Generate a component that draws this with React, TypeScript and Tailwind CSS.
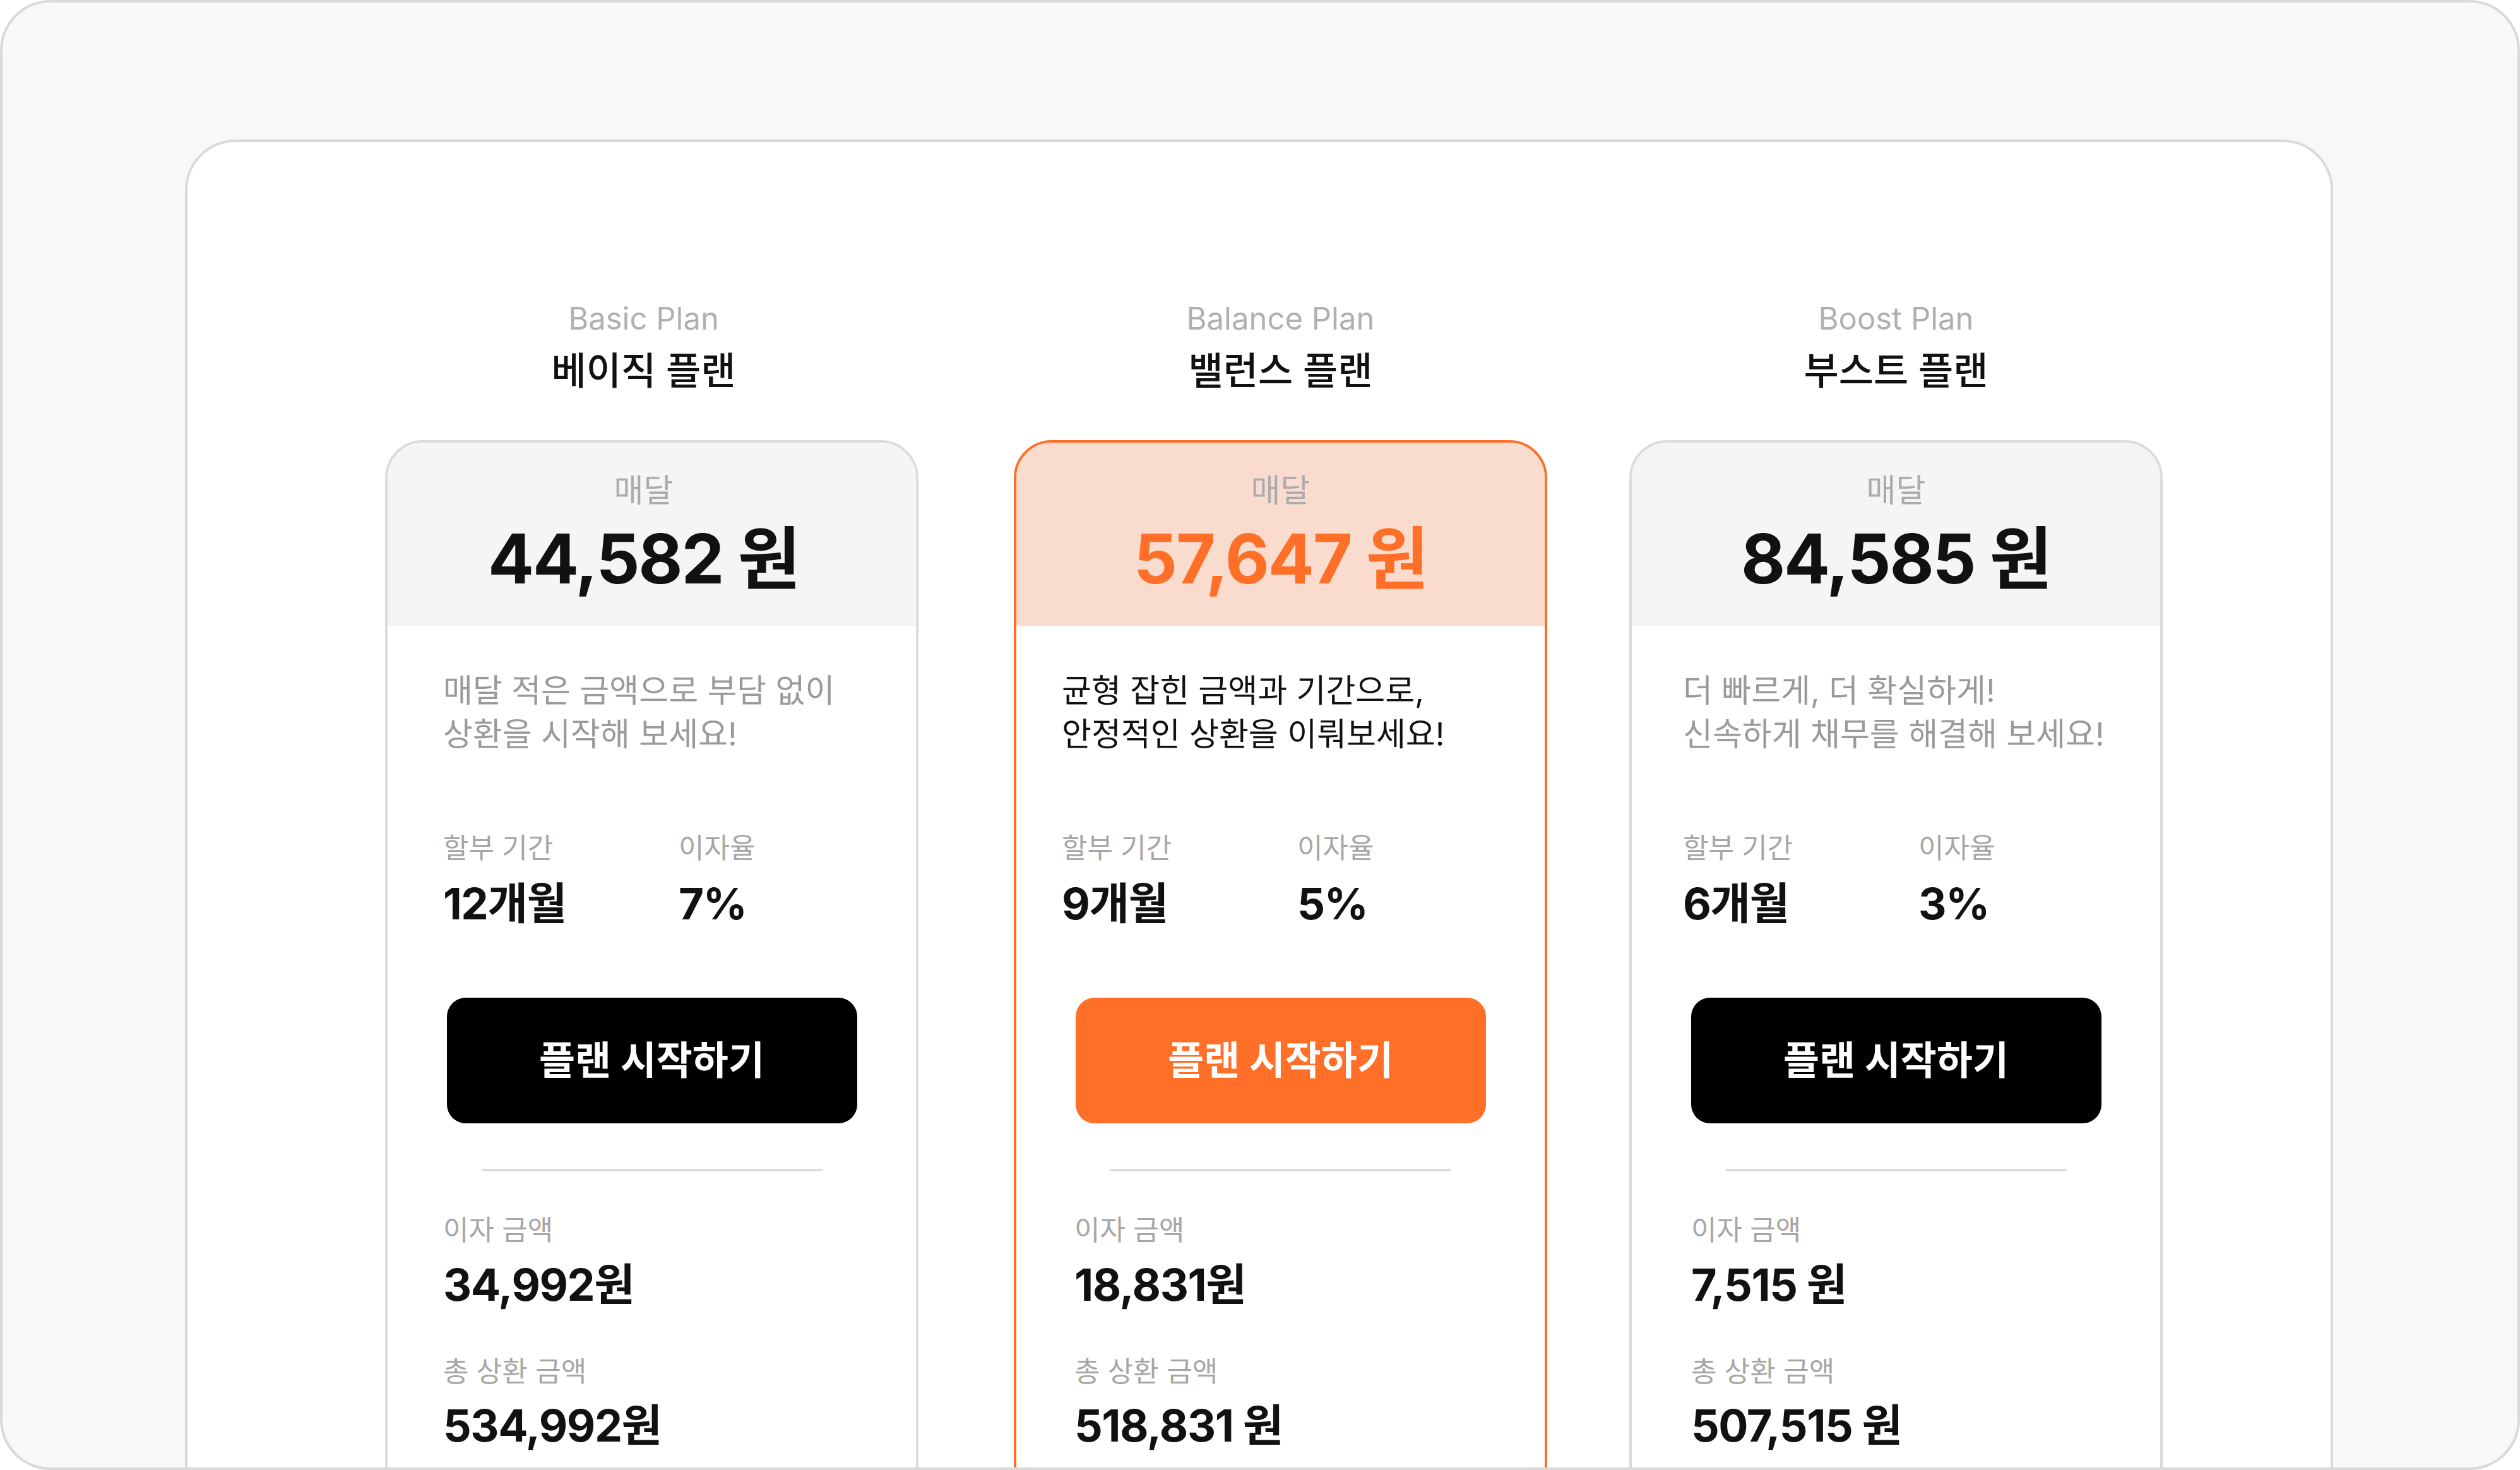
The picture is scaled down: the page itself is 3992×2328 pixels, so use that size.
const plans = [
  {
    en: 'Basic Plan',
    ko: '베이직 플랜',
    price: '44,582 원',
    desc: ['매달 적은 금액으로 부담 없이', '상환을 시작해 보세요!'],
    months: '12개월',
    rate: '7%',
    interest: '34,992원',
    total: '534,992원',
    highlight: false,
    wrap: 'ml-[313px]',
    shift: 'pr-[26px]',
    top: 'pl-[88px]',
    bottom: 'pl-[88px]',
  },
  {
    en: 'Balance Plan',
    ko: '밸런스 플랜',
    price: '57,647 원',
    desc: ['균형 잡힌 금액과 기간으로,', '안정적인 상환을 이뤄보세요!'],
    months: '9개월',
    rate: '5%',
    interest: '18,831원',
    total: '518,831 원',
    highlight: true,
    wrap: 'ml-[151px]',
    shift: '',
    top: 'pl-[72px]',
    bottom: 'pl-[92px]',
  },
  {
    en: 'Boost Plan',
    ko: '부스트 플랜',
    price: '84,585 원',
    desc: ['더 빠르게, 더 확실하게!', '신속하게 채무를 해결해 보세요!'],
    months: '6개월',
    rate: '3%',
    interest: '7,515 원',
    total: '507,515 원',
    highlight: false,
    wrap: 'ml-[130px]',
    shift: '',
    top: 'pl-[81px]',
    bottom: 'pl-[94px]',
  },
];

type Plan = (typeof plans)[number];

function PlanColumn({ plan }: { plan: Plan }) {
  const hl = plan.highlight;
  return (
    <div className={`${plan.wrap} flex w-[845px] shrink-0 flex-col`}>
      <div className={`flex flex-col items-center ${plan.shift}`}>
        <p className="text-[49px] leading-[58px] text-[#b0b0b0]">{plan.en}</p>
        <p className="mt-[19px] text-[60px] font-medium leading-[68px] text-[#111111]">{plan.ko}</p>
      </div>

      <div
        className={`mt-[76px] h-[1800px] overflow-hidden rounded-[60px] border-4 bg-white ${
          hl ? 'border-[#ff6f27]' : 'border-[#dcdcdc]'
        }`}
      >
        <div
          className={`flex flex-col items-center pt-[49px] pb-[46px] ${hl ? 'bg-[#f9dcce]' : 'bg-[#f5f5f5]'} ${plan.shift}`}
        >
          <p className="text-[51px] leading-[54px] text-[#acacac]">매달</p>
          <p
            className={`mt-[21px] text-[108px] font-bold leading-[120px] tracking-[-0.02em] ${
              hl ? 'text-[#ff6f27]' : 'text-[#111111]'
            }`}
          >
            {plan.price}
          </p>
        </div>

        <div className="flex flex-col pt-[68px]">
          <div className={plan.top}>
            <p className={`text-[51px] leading-[69px] ${hl ? 'text-[#111111]' : 'text-[#9a9a9a]'}`}>
              {plan.desc[0]}
              <br />
              {plan.desc[1]}
            </p>
            <div className="mt-[120px] flex">
              <div className="w-[373px]">
                <p className="text-[44px] leading-[52px] text-[#a6a6a6]">할부 기간</p>
                <p className="mt-[24px] text-[69px] font-bold leading-[76px] tracking-[-0.02em] text-[#111111]">
                  {plan.months}
                </p>
              </div>
              <div>
                <p className="text-[44px] leading-[52px] text-[#a6a6a6]">이자율</p>
                <p className="mt-[24px] text-[69px] font-bold leading-[76px] tracking-[-0.02em] text-[#111111]">
                  {plan.rate}
                </p>
              </div>
            </div>
          </div>

          <button
            className={`mt-[111px] flex h-[199px] w-[650px] items-center justify-center self-center rounded-[30px] text-[62px] font-bold text-white ${
              hl ? 'bg-[#ff6f27]' : 'bg-black'
            }`}
          >
            플랜 시작하기
          </button>

          <div className="mt-[72px] h-[4px] w-[540px] self-center bg-[#dcdcdc]" />

          <div className={plan.bottom}>
            <p className="mt-[67px] text-[44px] leading-[52px] text-[#a6a6a6]">이자 금액</p>
            <p className="mt-[21px] text-[70px] font-bold leading-[80px] tracking-[-0.02em] text-[#111111]">
              {plan.interest}
            </p>
            <p className="mt-[71px] text-[44px] leading-[52px] text-[#a6a6a6]">총 상환 금액</p>
            <p className="mt-[20px] text-[70px] font-bold leading-[80px] tracking-[-0.02em] text-[#111111]">
              {plan.total}
            </p>
          </div>
        </div>
      </div>
    </div>
  );
}

export default function App() {
  return (
    <div className="h-[2328px] w-[3992px] overflow-hidden rounded-[80px] border-4 border-[#d9d9d9] bg-[#f8f8f8] pt-[217px] font-['Inter','Noto_Sans_CJK_KR',sans-serif] text-[#111111]">
      <div className="ml-[289px] h-[2400px] w-[3403px] rounded-[80px] border-4 border-[#d9d9d9] bg-white pt-[251px]">
        <div className="flex">
          {plans.map((plan) => (
            <PlanColumn key={plan.en} plan={plan} />
          ))}
        </div>
      </div>
    </div>
  );
}
